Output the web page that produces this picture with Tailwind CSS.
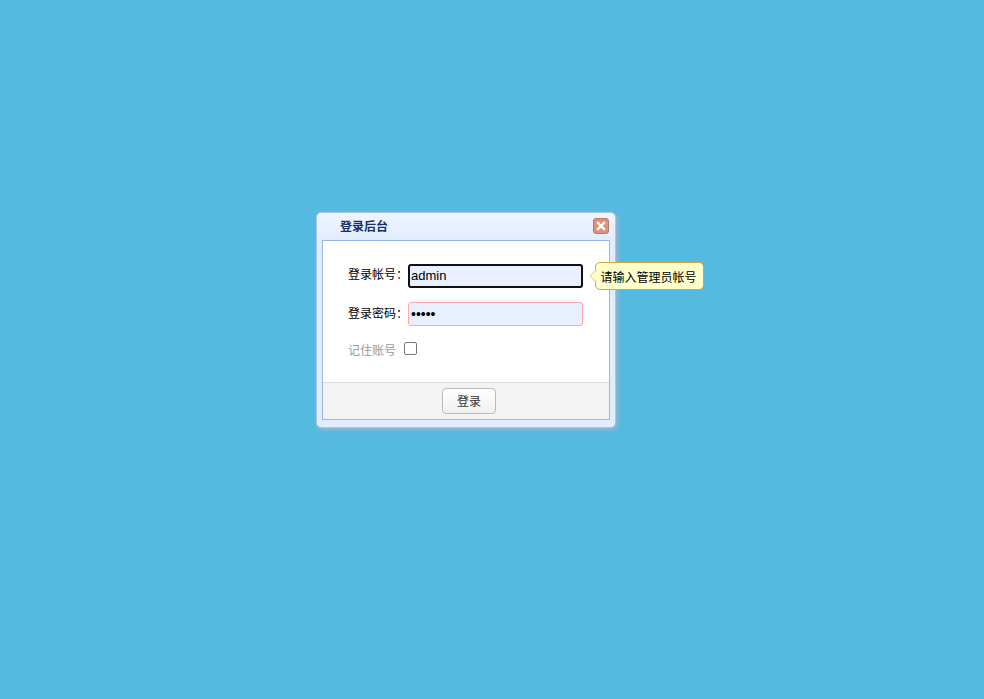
<!DOCTYPE html>
<html lang="zh-CN">
<head>
  <meta charset="UTF-8">
  <script src="https://cdn.jsdelivr.net/npm/@tailwindcss/browser@4"></script>
  <title>登录后台</title>
</head>
<body class="bg-[#54badf] h-[699px] overflow-hidden font-['Liberation_Sans','Noto_Sans_CJK_SC',sans-serif] text-[12px]">

  <div class="pt-[212px] pl-[316px]">
    <!-- window -->
    <div class="relative w-[300px] h-[216px] rounded-[5px] border border-[#a9c5ea] bg-gradient-to-b from-[#eff5ff] to-[#e0ecff] to-[14%] px-[5px] pb-[7px] shadow-[2px_2px_4px_rgba(165,180,210,0.9)] flex flex-col">
      <div class="h-[27px] shrink-0 flex items-center justify-between">
        <span class="ml-[18px] font-bold text-[#14336b] mt-[1px]">登录后台</span>
        <button class="mt-[-1px] mr-[1px] w-[16px] h-[16px] rounded-[3px] border border-[#b67a66] bg-[#de9179] flex items-center justify-center">
          <svg width="10" height="10" viewBox="0 0 10 10"><path d="M2 2 8 8M8 2 2 8" stroke="#fff" stroke-width="2.4" stroke-linecap="square"/></svg>
        </button>
      </div>

      <div class="flex-1 border border-[#95b8e7] bg-white flex flex-col">
        <div class="h-[141px] shrink-0 pt-[23px] pl-[25px]">
          <div class="flex items-center h-[24px]">
            <label class="w-[60px] text-black mt-[-2px]">登录帐号：</label>
            <input value="admin" class="w-[175px] h-[24px] px-[1px] pb-[2px] rounded-[3px] border-2 border-[#101010] bg-[#e8f0fe] text-[13px] text-black font-['Liberation_Sans',sans-serif] outline-none">
          </div>
          <div class="flex items-center h-[24px] mt-[14px]">
            <label class="w-[60px] text-black">登录密码：</label>
            <input type="password" value="admin" class="w-[175px] h-[24px] px-[2px] rounded-[3px] border border-[#ffa8a8] bg-[#e8f0fe] text-[14px] text-black outline-none">
          </div>
          <div class="flex items-center h-[24px] mt-[12px]">
            <label class="w-[56px] text-[#999999] mt-[1px]">记住账号</label>
            <span class="block w-[13px] h-[13px] mt-[-4px] rounded-[2px] border border-[#767676] bg-white"></span>
          </div>
        </div>

        <div class="flex-1 border-t border-[#dddddd] bg-[#f3f3f3] flex items-center justify-center">
          <button class="ml-[6px] w-[54px] h-[26px] pt-[2px] rounded-[4px] border border-[#bbbbbb] bg-gradient-to-b from-white to-[#f0f0f0] text-[#333333] text-[12px]">登录</button>
        </div>
      </div>

      <!-- validation tooltip -->
      <div class="absolute left-[278px] top-[49px] w-[109px] h-[28px] pt-[3px] pr-[2px] rounded-[5px] border border-[#d6a53c] bg-[#ffffcc] text-black flex items-center justify-center">
        <svg class="absolute left-[-7px] top-[6px]" width="8" height="14" viewBox="0 0 8 14"><path d="M7.5 1 1 7l6.5 6" fill="#ffffcc" stroke="#e6c67a"/></svg>
        请输入管理员帐号
      </div>
    </div>
  </div>

</body>
</html>
